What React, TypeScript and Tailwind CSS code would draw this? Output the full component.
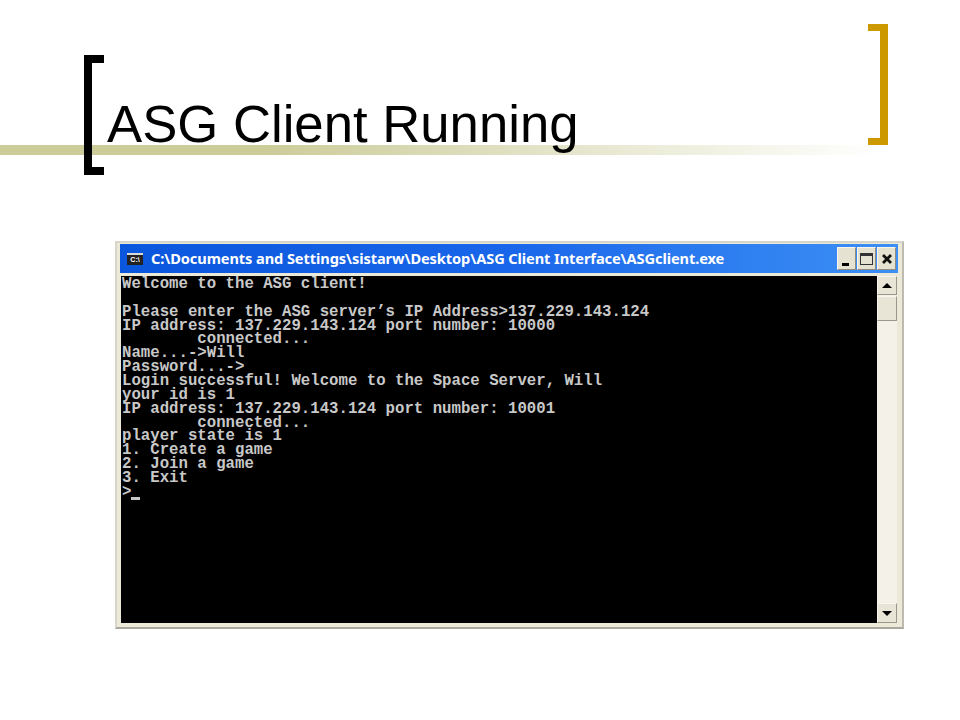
const lines = [
  "Welcome to the ASG client!",
  "",
  "Please enter the ASG server\u2019s IP Address>137.229.143.124",
  "IP address: 137.229.143.124 port number: 10000",
  "        connected...",
  "Name...->Will",
  "Password...->",
  "Login successful! Welcome to the Space Server, Will",
  "your id is 1",
  "IP address: 137.229.143.124 port number: 10001",
  "        connected...",
  "player state is 1",
  "1. Create a game",
  "2. Join a game",
  "3. Exit",
];

function CaptionButton({ children }: { children: React.ReactNode }) {
  return (
    <div className="flex h-[23px] w-[19px] items-center justify-center border border-t-[#f8f6ee] border-l-[#f8f6ee] border-r-[#8f8d80] border-b-[#8f8d80] bg-[#e6e2d2]">
      {children}
    </div>
  );
}

export default function App() {
  return (
    <div className="h-[720px] w-[960px] overflow-hidden bg-white font-['Liberation_Sans',Arial,sans-serif]">
      <header className="relative h-[241px] w-full">
        <div className="absolute left-0 top-[145px] h-[10px] w-[880px] bg-gradient-to-r from-[#cccc99] via-[#cccc99] via-30% to-white" />
        <div className="absolute left-[84px] top-[55px] h-[120px] w-[20px] border-y-[8px] border-l-[8px] border-black" />
        <div className="absolute left-[868px] top-[24px] h-[121px] w-[20px] border-y-[7px] border-r-[8px] border-[#cc9900]" />
        <h1 className="absolute left-[107px] top-[94px] whitespace-nowrap text-[52.7px] leading-[60px] text-black">ASG Client Running</h1>
      </header>

      <div className="ml-[115px] flex h-[388px] w-[789px] flex-col border-2 border-[#d8d6cb] border-r-[#bdbbb0] border-b-[#a9a79c] bg-[#ece9d8] pl-[3px] pr-[4px] pb-[4px] pt-[1px]">
        <div className="flex h-[29px] shrink-0 items-center bg-gradient-to-r from-[#0a56dc] via-[#1a66ea] to-[#3d8ff5] pl-[7px] pr-[2px]">
          <div className="flex h-[12px] w-[16px] shrink-0 flex-col border-t-2 border-[#d8d8d8] bg-[#222] text-center font-['Liberation_Sans',sans-serif] text-[7px] font-bold leading-[9px] text-white">
            C:\
          </div>
          <span className="ml-[8px] whitespace-nowrap font-['Noto_Sans','Liberation_Sans',sans-serif] text-[14.62px] font-bold leading-none tracking-[-0.1px] text-white">
            C:\Documents and Settings\sistarw\Desktop\ASG Client Interface\ASGclient.exe
          </span>
          <div className="ml-auto flex gap-px">
            <CaptionButton>
              <span className="mr-[3px] mt-[11px] block h-[3px] w-[7px] bg-black" />
            </CaptionButton>
            <CaptionButton>
              <span className="block h-[12px] w-[13px] border border-t-[3px] border-[#333]" />
            </CaptionButton>
            <CaptionButton>
              <svg width="12" height="12" viewBox="0 0 12 12">
                <path d="M2 2 L10 10 M10 2 L2 10" stroke="#111" strokeWidth="2.8" />
              </svg>
            </CaptionButton>
          </div>
        </div>

        <div className="ml-px mr-px flex min-h-0 flex-1 pt-[3px]">
          <div className="flex-1 bg-black pl-px pt-[2px] font-['Liberation_Mono','Courier_New',monospace] text-[15.7px] font-bold leading-[13.86px] text-[#c8c8c8]">
            {lines.map((line, i) => (
              <div key={i} className="h-[13.86px] whitespace-pre">
                {line}
              </div>
            ))}
            <div className="flex h-[13.86px] whitespace-pre">
              <span>&gt;</span>
              <span className="mt-[11px] h-[3px] w-[9px] bg-[#c8c8c8]" />
            </div>
          </div>
          <div className="flex w-[20px] shrink-0 flex-col bg-[#f4f2e8]">
            <div className="flex h-[19px] items-center justify-center border border-t-[#f8f6ee] border-l-[#f8f6ee] border-r-[#9a988b] border-b-[#9a988b] bg-[#e8e5d6]">
              <span className="h-0 w-0 border-x-[5px] border-b-[5px] border-x-transparent border-b-black" />
            </div>
            <div className="mt-px h-[25px] border border-t-[#f8f6ee] border-l-[#f8f6ee] border-r-[#9a988b] border-b-[#9a988b] bg-[#e8e5d6]" />
            <div className="flex-1" />
            <div className="flex h-[20px] items-center justify-center border border-t-[#f8f6ee] border-l-[#f8f6ee] border-r-[#9a988b] border-b-[#9a988b] bg-[#e8e5d6]">
              <span className="h-0 w-0 border-x-[5px] border-t-[5px] border-x-transparent border-t-black" />
            </div>
          </div>
        </div>
      </div>
    </div>
  );
}
